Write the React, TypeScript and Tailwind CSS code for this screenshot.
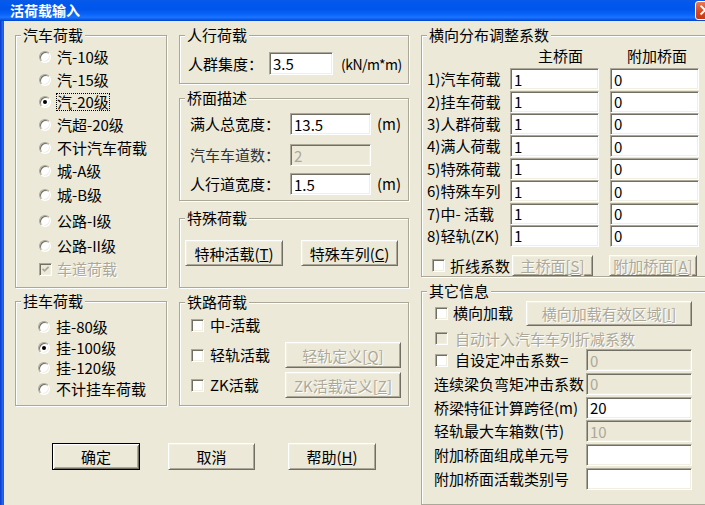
import React from "react";

type Kids = { children?: React.ReactNode; className?: string };

function Group({ title, className, children }: { title: string } & Kids) {
  return (
    <div
      className={
        "flex flex-col border border-[#ACA899] shadow-[inset_1px_1px_0_#fff,1px_1px_0_#fff] " +
        (className ?? "")
      }
    >
      <div className="-mt-[10px] ml-[5px] self-start bg-[#ECE9D8] px-[2px] leading-[18px] whitespace-nowrap">
        {title}
      </div>
      {children}
    </div>
  );
}

function Radio({ checked }: { checked?: boolean }) {
  return (
    <span className="flex h-[12px] w-[12px] shrink-0 items-center justify-center rounded-full border border-t-[#ACA899] border-l-[#ACA899] border-b-white border-r-white bg-white shadow-[inset_1px_1px_0_#716F64,inset_-1px_-1px_0_#F1EFE2]">
      {checked && <span className="h-[4px] w-[4px] rounded-full bg-black" />}
    </span>
  );
}

function Check({ checked, disabled }: { checked?: boolean; disabled?: boolean }) {
  return (
    <span
      className={
        "flex h-[13px] w-[13px] shrink-0 items-center justify-center border border-t-[#ACA899] border-l-[#ACA899] border-b-white border-r-white shadow-[inset_1px_1px_0_#716F64,inset_-1px_-1px_0_#F1EFE2] " +
        (disabled ? "bg-[#ECE9D8]" : "bg-white")
      }
    >
      {checked && (
        <svg viewBox="0 0 7 7" className="h-[7px] w-[7px]">
          <path
            d="M0.5 2.8 L2.6 4.9 L6.6 0.9"
            fill="none"
            stroke={disabled ? "#ACA899" : "#000"}
            strokeWidth="1.7"
          />
        </svg>
      )}
    </span>
  );
}

function Field({ value, disabled, className }: { value?: string; disabled?: boolean; className?: string }) {
  return (
    <div
      className={
        "flex shrink-0 items-center overflow-hidden whitespace-nowrap border border-t-[#ACA899] border-l-[#ACA899] border-b-white border-r-white pl-[3px] leading-none shadow-[inset_1px_1px_0_#716F64,inset_-1px_-1px_0_#F1EFE2] " +
        (disabled ? "bg-[#ECE9D8] text-[#ACA899] " : "bg-white text-black ") +
        (className ?? "")
      }
    >
      {value}
    </div>
  );
}

function Btn({
  children,
  disabled,
  def,
  className,
}: { disabled?: boolean; def?: boolean } & Kids) {
  const base =
    "flex shrink-0 items-center justify-center whitespace-nowrap leading-none ";
  const frame = def
    ? "border border-black shadow-[inset_1px_1px_0_#fff,inset_-1px_-1px_0_#716F64,inset_2px_2px_0_#F1EFE2,inset_-2px_-2px_0_#ACA899] "
    : "border border-t-white border-l-white border-b-[#716F64] border-r-[#716F64] shadow-[inset_1px_1px_0_#F1EFE2,inset_-1px_-1px_0_#ACA899] ";
  const txt = disabled ? "text-[#ACA899] [text-shadow:1px_1px_0_#fff] " : "text-black ";
  return <div className={base + frame + txt + (className ?? "")}>{children}</div>;
}

function RadioRow({
  label,
  checked,
  focus,
  className,
}: { label: string; checked?: boolean; focus?: boolean; className?: string }) {
  return (
    <div className={"flex items-center " + (className ?? "")}>
      <Radio checked={checked} />
      <span
        className={
          "ml-[5px] whitespace-nowrap border leading-[16px] " +
          (focus ? "border-dotted border-black" : "border-transparent")
        }
      >
        {label}
      </span>
    </div>
  );
}

const coefRows = [
  "1)汽车荷载",
  "2)挂车荷载",
  "3)人群荷载",
  "4)满人荷载",
  "5)特殊荷载",
  "6)特殊车列",
  "7)中- 活载",
  "8)轻轨(ZK)",
];

export default function App() {
  return (
    <div className="flex h-[505px] w-[705px] flex-col overflow-hidden bg-[#ECE9D8] font-['Noto_Sans_CJK_SC','Noto_Sans',sans-serif] text-[15px] leading-[18px] text-black">
      {/* title bar */}
      <div className="flex h-[21px] shrink-0 items-start justify-between bg-[linear-gradient(to_bottom,#0A5AE6_0%,#0058EE_15%,#0055EA_45%,#0A66FA_70%,#1B74FF_82%,#0B5CEB_92%,#0043C8_100%)] pl-[10px]">
        <span className="mt-[1px] text-[14px] font-bold leading-[18px] tracking-[0px] text-white">
          活荷载输入
        </span>
        <div className="mr-[-11px] mt-[1px] h-[19px] w-[21px] rounded-[3px] border border-white bg-[linear-gradient(to_bottom,#E97A56,#D9471E_55%,#C43A12)]">
          <svg viewBox="0 0 21 19" className="h-full w-full">
            <path d="M5 4 L15 14 M15 4 L5 14" stroke="#fff" strokeWidth="2.2" />
          </svg>
        </div>
      </div>

      <div className="flex min-h-0 flex-1">
        {/* left window border */}
        <div className="w-[4px] shrink-0 bg-[linear-gradient(to_right,#0838C4,#1A5DEE_50%,#2A6FF2_75%,#0A4ADA)]" />

        <div className="flex gap-[12px] pl-[11px] pt-[14px]">
          {/* left block */}
          <div className="flex flex-col">
            <div className="flex gap-[12px]">
              {/* column 1 */}
              <div className="flex w-[152px] flex-col">
                <Group title="汽车荷载" className="h-[253px]">
                  <div className="mt-[2px] flex flex-col pl-[23px]">
                    <RadioRow label="汽-10级" className="h-[22.5px]" />
                    <RadioRow label="汽-15级" className="h-[22px]" />
                    <RadioRow label="汽-20级" checked focus className="h-[23.5px]" />
                    <RadioRow label="汽超-20级" className="h-[22.5px]" />
                    <RadioRow label="不计汽车荷载" className="h-[23px]" />
                    <RadioRow label="城-A级" className="h-[22px]" />
                    <RadioRow label="城-B级" className="h-[26px]" />
                    <RadioRow label="公路-I级" className="h-[26px]" />
                    <RadioRow label="公路-II级" className="h-[24.5px]" />
                    <div className="flex h-[22px] items-center">
                      <Check checked disabled />
                      <span className="ml-[5px] text-[#ACA899] [text-shadow:1px_1px_0_#fff]">
                        车道荷载
                      </span>
                    </div>
                  </div>
                </Group>
                <Group title="挂车荷载" className="mt-[13px] h-[105px]">
                  <div className="mt-[6.5px] flex flex-col pl-[22px]">
                    <RadioRow label="挂-80级" className="h-[20.8px]" />
                    <RadioRow label="挂-100级" checked className="h-[20.8px]" />
                    <RadioRow label="挂-120级" className="h-[20.8px]" />
                    <RadioRow label="不计挂车荷载" className="h-[20.8px]" />
                  </div>
                </Group>
              </div>

              {/* column 2 */}
              <div className="flex w-[230px] flex-col">
                <Group title="人行荷载" className="h-[49px]">
                  <div className="mt-[8px] flex h-[23px] items-center pl-[8px]">
                    <span className="w-[75px] whitespace-nowrap">人群集度：</span>
                    <Field value="3.5" className="ml-[6px] h-[23px] w-[64px]" />
                    <span className="ml-[8px] whitespace-nowrap text-[14px] tracking-[-0.5px]">
                      (kN/m*m)
                    </span>
                  </div>
                </Group>
                <Group title="桥面描述" className="mt-[14px] h-[103px]">
                  <div className="flex flex-col pl-[10px]">
                    <div className="mt-[6px] flex h-[22px] items-center">
                      <span className="w-[90px] whitespace-nowrap">满人总宽度：</span>
                      <Field value="13.5" className="ml-[10px] h-[22px] w-[81px]" />
                      <span className="ml-[6px]">(m)</span>
                    </div>
                    <div className="mt-[9px] flex h-[22px] items-center">
                      <span className="w-[90px] whitespace-nowrap text-[#333]">汽车车道数：</span>
                      <Field value="2" disabled className="ml-[10px] h-[22px] w-[81px]" />
                    </div>
                    <div className="mt-[7px] flex h-[22px] items-center">
                      <span className="w-[90px] whitespace-nowrap">人行道宽度：</span>
                      <Field value="1.5" className="ml-[10px] h-[22px] w-[81px]" />
                      <span className="ml-[6px]">(m)</span>
                    </div>
                  </div>
                </Group>
                <Group title="特殊荷载" className="mt-[17px] h-[70px]">
                  <div className="mt-[13px] flex pl-[5px]">
                    <Btn className="h-[26px] w-[98px]">
                      特种活载(<u>T</u>)
                    </Btn>
                    <Btn className="ml-[18px] h-[26px] w-[97px]">
                      特殊车列(<u>C</u>)
                    </Btn>
                  </div>
                </Group>
                <Group title="铁路荷载" className="mt-[14px] h-[104px]">
                  <div className="-mt-[1px] flex flex-col pl-[11px]">
                    <div className="flex h-[30px] items-center">
                      <div className="flex w-[94px] items-center">
                        <Check />
                        <span className="ml-[6px] whitespace-nowrap">中-活载</span>
                      </div>
                    </div>
                    <div className="flex h-[30px] items-center">
                      <div className="flex w-[94px] items-center">
                        <Check />
                        <span className="ml-[6px] whitespace-nowrap">轻轨活载</span>
                      </div>
                      <Btn disabled className="h-[26px] w-[116px]">
                        轻轨定义[<u>Q</u>]
                      </Btn>
                    </div>
                    <div className="flex h-[30px] items-center">
                      <div className="flex w-[94px] items-center">
                        <Check />
                        <span className="ml-[6px] whitespace-nowrap">ZK活载</span>
                      </div>
                      <Btn disabled className="h-[26px] w-[116px]">
                        ZK活载定义[<u>Z</u>]
                      </Btn>
                    </div>
                  </div>
                </Group>
              </div>
            </div>

            {/* bottom buttons */}
            <div className="mt-[37px] flex pl-[37px]">
              <Btn def className="h-[27px] w-[88px]">
                确定
              </Btn>
              <Btn className="ml-[28px] h-[27px] w-[87px]">取消</Btn>
              <Btn className="ml-[33px] h-[27px] w-[88px]">
                帮助(<u>H</u>)
              </Btn>
            </div>
          </div>

          {/* column 3 */}
          <div className="flex w-[300px] shrink-0 flex-col">
            <Group title="横向分布调整系数" className="h-[253px]">
              <div className="flex flex-col pl-[5px]">
                <div className="flex h-[24px] items-center">
                  <span className="ml-[111px] whitespace-nowrap">主桥面</span>
                  <span className="ml-[44px] whitespace-nowrap">附加桥面</span>
                </div>
                {coefRows.map((r) => (
                  <div key={r} className="flex h-[22.4px] items-center">
                    <span className="w-[83px] whitespace-nowrap">{r}</span>
                    <Field value="1" className="h-[22px] w-[89px]" />
                    <Field value="0" className="ml-[11px] h-[22px] w-[89px]" />
                  </div>
                ))}
                <div className="mt-[8px] flex h-[21px] items-center">
                  <span className="ml-[5px]">
                    <Check />
                  </span>
                  <span className="ml-[5px] w-[62px] whitespace-nowrap">折线系数</span>
                  <Btn disabled className="h-[21px] w-[81px]">
                    主桥面[<u>S</u>]
                  </Btn>
                  <Btn disabled className="ml-[16px] h-[21px] w-[88px]">
                    附加桥面[<u>A</u>]
                  </Btn>
                </div>
              </div>
            </Group>

            <Group title="其它信息" className="mt-[14px] h-[250px]">
              <div className="flex flex-col">
                <div className="flex h-[26px] items-center pl-[13px]">
                  <Check />
                  <span className="ml-[5px] w-[73px] whitespace-nowrap">横向加载</span>
                  <Btn disabled className="h-[25px] w-[166px]">
                    横向加载有效区域[<u>I</u>]
                  </Btn>
                </div>
                <div className="flex h-[22px] items-center pl-[13px] pt-[3px]">
                  <Check disabled />
                  <span className="ml-[7px] whitespace-nowrap text-[#ACA899] [text-shadow:1px_1px_0_#fff]">
                    自动计入汽车车列折减系数
                  </span>
                </div>
                <div className="flex h-[23.8px] items-center">
                  <div className="flex w-[164px] items-center pl-[13px]">
                    <Check />
                    <span className="ml-[7px] whitespace-nowrap">自设定冲击系数=</span>
                  </div>
                  <Field value="0" disabled className="h-[22px] w-[106px]" />
                </div>
                <div className="flex h-[23.8px] items-center">
                  <span className="w-[164px] whitespace-nowrap pl-[12px]">连续梁负弯矩冲击系数</span>
                  <Field value="0" disabled className="h-[22px] w-[106px]" />
                </div>
                <div className="flex h-[23.8px] items-center">
                  <span className="w-[164px] whitespace-nowrap pl-[12px]">桥梁特征计算跨径(m)</span>
                  <Field value="20" className="h-[22px] w-[106px]" />
                </div>
                <div className="flex h-[23.8px] items-center">
                  <span className="w-[164px] whitespace-nowrap pl-[12px]">轻轨最大车箱数(节)</span>
                  <Field value="10" disabled className="h-[22px] w-[106px]" />
                </div>
                <div className="flex h-[23.8px] items-center">
                  <span className="w-[164px] whitespace-nowrap pl-[12px]">附加桥面组成单元号</span>
                  <Field value="" className="h-[22px] w-[106px]" />
                </div>
                <div className="flex h-[23.8px] items-center">
                  <span className="w-[164px] whitespace-nowrap pl-[12px]">附加桥面活载类别号</span>
                  <Field value="" className="h-[22px] w-[106px]" />
                </div>
              </div>
            </Group>
          </div>
        </div>
      </div>
    </div>
  );
}
